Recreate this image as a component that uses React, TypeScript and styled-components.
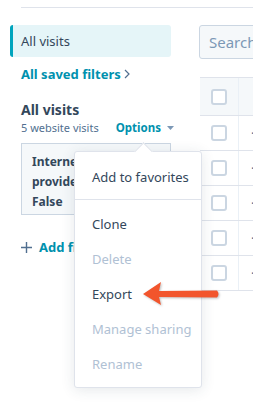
import styled, { createGlobalStyle } from "styled-components";

const GlobalStyle = createGlobalStyle`
    html, body {
        margin: 0;
        padding: 0;
        background: #ffffff;
    }
    body {
        font-family: "Noto Sans", "Liberation Sans", sans-serif;
        color: #33475b;
    }
`;

const Spage = styled.div`
    position: relative;
    width: 253px;
    height: 408px;
    overflow: hidden;
`;
const StopRule = styled.div`
    margin: 7px 0 0 21px;
    border-top: 1px solid #dfe3eb;
`;
const Smain = styled.div`
    display: flex;
    padding: 17px 0 0 10px;
`;
const Ssidebar = styled.div`
    width: 161px;
    flex-shrink: 0;
    display: flex;
    flex-direction: column;
`;
const SnavItem = styled.div`
    height: 32px;
    display: flex;
    align-items: center;
    padding-left: 8px;
    border-left: 3px solid #00a4bd;
    border-radius: 3px;
    background: #e5f5f8;
    font-size: 13px;
    color: #33475b;
`;
const SsavedLink = styled.div`
    margin: 8px 0 0 11px;
    line-height: 18px;
    font-size: 13px;
    font-weight: 700;
    color: #0091ae;
    display: flex;
    align-items: center;
    gap: 3px;
`;
const SviewTitle = styled.div`
    margin: 17px 0 0 11px;
    line-height: 20px;
    font-size: 14px;
    font-weight: 700;
    color: #33475b;
`;
const SmetaRow = styled.div`
    margin-left: 11px;
    line-height: 16px;
    font-size: 11px;
    color: #516f90;
    display: flex;
    align-items: center;
    white-space: nowrap;
`;
const SoptionsLink = styled.span`
    margin-left: 17px;
    font-size: 11.5px;
    font-weight: 700;
    color: #0091ae;
    display: flex;
    align-items: center;
    gap: 6px;
`;
const SfilterCard = styled.div`
    margin: 7px 0 0 11px;
    width: 150px;
    height: 72px;
    box-sizing: border-box;
    padding: 8px 10px;
    border: 1px solid #cbd6e2;
    background: #f5f8fa;
    font-size: 12px;
    font-weight: 700;
    line-height: 20px;
    color: #33475b;
`;
const SaddFilter = styled.div`
    margin: 23px 0 0 11px;
    line-height: 18px;
    font-size: 13px;
    font-weight: 700;
    color: #0091ae;
    display: flex;
    align-items: center;
    gap: 7px;
`;
const Scontent = styled.div`
    margin-left: 28px;
    flex: 1;
    display: flex;
    flex-direction: column;
    min-width: 0;
`;
const Ssearch = styled.div`
    height: 34px;
    width: 120px;
    box-sizing: border-box;
    border: 1px solid #cbd6e2;
    border-radius: 3px;
    background: #f5f8fa;
    padding-left: 9px;
    display: flex;
    align-items: center;
    font-size: 15px;
    color: #7c98b6;
`;
const Stable = styled.div`
    margin: 18px 0 0 1px;
    width: 120px;
`;
const Srow = styled.div<{ $head?: boolean }>`
    display: flex;
    height: ${(p) => (p.$head ? "39px" : "35px")};
    box-sizing: border-box;
    background: ${(p) => (p.$head ? "#f5f8fa" : "#ffffff")};
    border-bottom: 1px solid #dfe3eb;
    border-top: ${(p) => (p.$head ? "1px solid #dfe3eb" : "none")};
`;
const ScheckCell = styled.div`
    width: 39px;
    flex-shrink: 0;
    display: flex;
    align-items: center;
    justify-content: center;
    border-right: 1px solid #eaf0f6;
    box-sizing: border-box;
`;
const Scheckbox = styled.div`
    width: 16px;
    height: 16px;
    box-sizing: border-box;
    border: 2px solid #cbd6e2;
    border-radius: 3px;
    background: #ffffff;
`;
const StextCell = styled.div`
    padding-left: 12px;
    display: flex;
    align-items: center;
    font-size: 12px;
    color: #516f90;
`;
const Smenu = styled.div`
    position: absolute;
    left: 74px;
    top: 151px;
    width: 128px;
    height: 237px;
    box-sizing: border-box;
    padding: 7px 0 6px;
    background: #ffffff;
    border: 1px solid #dfe3eb;
    border-radius: 3px;
    box-shadow: 0 2px 14px rgba(45, 62, 80, 0.12);
    &::before {
        content: "";
        position: absolute;
        left: 62px;
        top: -7px;
        width: 12px;
        height: 12px;
        background: #ffffff;
        border-left: 1px solid #dfe3eb;
        border-top: 1px solid #dfe3eb;
        transform: rotate(45deg);
    }
`;
const SmenuItem = styled.div<{ $disabled?: boolean }>`
    height: 35px;
    padding-left: 17px;
    display: flex;
    align-items: center;
    font-size: 13px;
    white-space: nowrap;
    color: ${(p) => (p.$disabled ? "#b0c1d4" : "#33475b")};
`;
const Sdivider = styled.div`
    margin: 5px 0 6px;
    border-top: 1px solid #dfe3eb;
`;
const Sarrow = styled.svg`
    position: absolute;
    left: 139px;
    top: 280px;
    filter: drop-shadow(1px 1px 1px rgba(0, 0, 0, 0.25));
`;

const rows = [0, 1, 2, 3, 4];
const menuItems = [
    { label: "Clone", disabled: false },
    { label: "Delete", disabled: true },
    { label: "Export", disabled: false },
    { label: "Manage sharing", disabled: true },
    { label: "Rename", disabled: true },
];

const App = () => {
    return (
        <Spage>
            <GlobalStyle />
            <StopRule />
            <Smain>
                <Ssidebar>
                    <SnavItem>All visits</SnavItem>
                    <SsavedLink>
                        All saved filters
                        <svg width="6" height="10" viewBox="0 0 6 10">
                            <path d="M1 1 L5 5 L1 9" stroke="#516f90" strokeWidth="1.2" fill="none" />
                        </svg>
                    </SsavedLink>
                    <SviewTitle>All visits</SviewTitle>
                    <SmetaRow>
                        5 website visits
                        <SoptionsLink>
                            Options
                            <svg width="7" height="4" viewBox="0 0 7 4">
                                <path d="M0 0 L7 0 L3.5 4 Z" fill="#7c98b6" />
                            </svg>
                        </SoptionsLink>
                    </SmetaRow>
                    <SfilterCard>
                        <div>Internet</div>
                        <div>provider</div>
                        <div>False</div>
                    </SfilterCard>
                    <SaddFilter>
                        <svg width="11" height="11" viewBox="0 0 11 11">
                            <path d="M5.5 0 V11 M0 5.5 H11" stroke="#516f90" strokeWidth="1.4" />
                        </svg>
                        Add filter
                    </SaddFilter>
                </Ssidebar>
                <Scontent>
                    <Ssearch>Search</Ssearch>
                    <Stable>
                        <Srow $head>
                            <ScheckCell><Scheckbox /></ScheckCell>
                            <StextCell />
                        </Srow>
                        {rows.map((r) => (
                            <Srow key={r}>
                                <ScheckCell><Scheckbox /></ScheckCell>
                                <StextCell>·</StextCell>
                            </Srow>
                        ))}
                    </Stable>
                </Scontent>
            </Smain>
            <Smenu>
                <SmenuItem>Add to favorites</SmenuItem>
                <Sdivider />
                {menuItems.map((item) => (
                    <SmenuItem key={item.label} $disabled={item.disabled}>{item.label}</SmenuItem>
                ))}
            </Smenu>
            <Sarrow width="84" height="28" viewBox="0 0 84 28">
                <path d="M4 14 L22 2 L20 11 L78 10.5 Q81 14 78 17.5 L20 17 L22 25 Z" fill="#f2552c" />
            </Sarrow>
        </Spage>
    );
};

export default App;
